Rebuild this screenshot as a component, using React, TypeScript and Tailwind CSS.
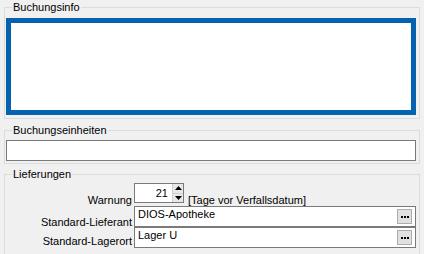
import React from 'react';

const FONT = { fontFamily: '"Liberation Sans", Arial, sans-serif' };

function EllipsisButton() {
  return (
    <div className="absolute right-[3px] top-[2px] w-[15px] h-[15px] bg-[#e1e1e1] border border-[#adadad] flex items-center justify-center gap-[1px]">
      <span className="w-[2px] h-[2px] bg-black" />
      <span className="w-[2px] h-[2px] bg-black" />
      <span className="w-[2px] h-[2px] bg-black" />
    </div>
  );
}

function Spinner() {
  return (
    <div className="w-[11px] h-full flex flex-col border-l border-[#cfcfcf]">
      <div className="flex-1 bg-[#e8e8e8] flex items-center justify-center border-b border-[#cfcfcf]">
        <svg width="7" height="4" viewBox="0 0 7 4"><path d="M3.5 0 L7 4 L0 4 Z" fill="#000" /></svg>
      </div>
      <div className="flex-1 bg-[#e8e8e8] flex items-center justify-center">
        <svg width="7" height="4" viewBox="0 0 7 4"><path d="M0 0 L7 0 L3.5 4 Z" fill="#000" /></svg>
      </div>
    </div>
  );
}

export default function App() {
  return (
    <div className="w-[424px] h-[254px] bg-[#f0f0f0] text-[11px] text-black overflow-hidden px-[4px] pt-[1px]" style={FONT}>
      {/* Buchungsinfo */}
      <fieldset className="border border-[#dcdcdc] pl-px pr-[3px] pb-[3px] pt-[4px]">
        <legend className="ml-[6px] px-[1px] leading-[13px]">Buchungsinfo</legend>
        <div className="h-[97px] border-[5px] border-[#0562b0] bg-white" />
      </fieldset>

      {/* Buchungseinheiten */}
      <fieldset className="mt-[5px] border border-[#dcdcdc] pl-px pr-[3px] pb-[2px] pt-[3px]">
        <legend className="ml-[6px] px-[1px] leading-[13px]">Buchungseinheiten</legend>
        <div className="h-[21px] border border-[#7a7a7a] bg-white" />
      </fieldset>

      {/* Lieferungen */}
      <fieldset className="mt-[4px] border border-[#dcdcdc] pl-px pr-[3px] pb-[6px] pt-[2px]">
        <legend className="ml-[6px] px-[1px] leading-[13px]">Lieferungen</legend>
        <div className="grid grid-cols-[126px_1fr] gap-x-[2px] gap-y-[3px]">
          <div className="text-right self-end leading-[13px] -mb-[4px]">Warnung</div>
          <div className="flex items-end gap-[4px]">
            <div className="w-[50px] h-[20px] border border-[#7a7a7a] bg-white flex">
              <div className="flex-1 text-right pr-[4px] leading-[13px] pt-[3px]">21</div>
              <Spinner />
            </div>
            <span className="leading-[13px] -mb-[4px]">[Tage vor Verfallsdatum]</span>
          </div>

          <div className="text-right self-end leading-[13px] -mb-[2px]">Standard-Lieferant</div>
          <div className="relative h-[21px] border border-[#7a7a7a] bg-white pl-[3px] leading-[13px] pt-px">
            DIOS-Apotheke
            <EllipsisButton />
          </div>

          <div className="text-right self-end leading-[13px] -mt-[3px]">Standard-Lagerort</div>
          <div className="relative h-[21px] border border-[#7a7a7a] bg-white pl-[3px] leading-[13px] pt-px -mt-[3px]">
            Lager U
            <EllipsisButton />
          </div>
        </div>
      </fieldset>
    </div>
  );
}
